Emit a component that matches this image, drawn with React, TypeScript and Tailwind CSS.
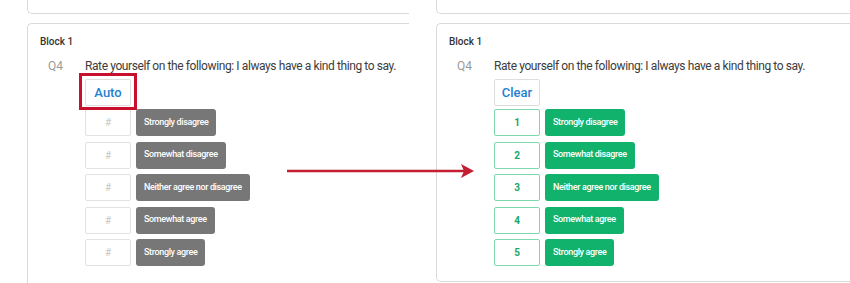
import React from "react";

const choices = [
  "Strongly disagree",
  "Somewhat disagree",
  "Neither agree nor disagree",
  "Somewhat agree",
  "Strongly agree",
];

const font = "font-['Roboto',_'Liberation_Sans',_sans-serif]";

function ChoiceRow({ label, index, filled }: { label: string; index: number; filled: boolean }) {
  return (
    <div className="flex h-[27px] gap-[5px]">
      <div
        className={
          filled
            ? "flex w-[46px] items-center justify-center rounded-[2px] border border-[#7dd8ae] text-[10px] font-bold text-[#1aa868]"
            : "flex w-[46px] items-center justify-center rounded-[2px] border border-[#e2e2e2] text-[10px] text-[#c8c8c8]"
        }
      >
        {filled ? index + 1 : "#"}
      </div>
      <div
        className={
          filled
            ? "flex items-center rounded-[3px] bg-[#10b26c] px-[8px] text-[9px] font-medium tracking-[-0.35px] text-white"
            : "flex items-center rounded-[3px] bg-[#777777] px-[8px] text-[9px] font-medium tracking-[-0.35px] text-white"
        }
      >
        {label}
      </div>
    </div>
  );
}

function Panel({ filled }: { filled: boolean }) {
  return (
    <div className={`flex h-full flex-col overflow-hidden ${filled ? "w-[414px]" : "w-[409px] pl-[27px]"}`}>
      {/* card above, only its bottom edge shows */}
      <div className="h-[14px] w-[700px] shrink-0 rounded-bl-[5px] border-b border-l border-[#dadada]" />
      <div
        className={`mt-[9px] w-[700px] rounded-tl-[5px] border-l border-t border-[#dadada] pl-[12px] pt-[11px] ${
          filled ? "h-[259px] rounded-bl-[5px] border-b" : "flex-1"
        }`}
      >
        <div className="text-[10px] font-medium leading-[14px] text-[#333]">Block 1</div>
        <div className="mt-[9px] flex pl-[8px]">
          <div className="w-[37px] text-[12px] leading-[16px] text-[#9a9a9a]">Q4</div>
          <div className="flex flex-col">
            <div className="text-[12px] leading-[16px] tracking-[-0.4px] text-[#3c3c3c]">
              Rate yourself on the following: I always have a kind thing to say.
            </div>
            <div className="mt-[5px] flex">
              <div className="relative">
                <button className="h-[27px] w-[46px] rounded-[2px] border border-[#dedede] bg-white text-[13px] font-medium text-[#1f7fd0]">
                  {filled ? "Clear" : "Auto"}
                </button>
                {!filled && (
                  <div className="pointer-events-none absolute -inset-[6px] -bottom-[4px] border-[3px] border-[#c8102e]" />
                )}
              </div>
            </div>
            <div className="mt-[3px] flex flex-col gap-[5.5px]">
              {choices.map((c, i) => (
                <ChoiceRow key={c} label={c} index={i} filled={filled} />
              ))}
            </div>
          </div>
        </div>
      </div>
    </div>
  );
}

export default function App() {
  return (
    <div className={`relative flex h-[283px] w-[850px] overflow-hidden bg-white ${font}`}>
      <Panel filled={false} />
      <div className="w-[27px] shrink-0" />
      <Panel filled />
      {/* annotation arrow */}
      <svg className="absolute left-[286px] top-[163px]" width="190" height="16" viewBox="0 0 190 16">
        <line x1="1" y1="8" x2="178" y2="8" stroke="#c41e33" strokeWidth="2.5" />
        <path d="M175 1 L188 8 L175 15 L178 8 Z" fill="#c41e33" />
      </svg>
    </div>
  );
}
